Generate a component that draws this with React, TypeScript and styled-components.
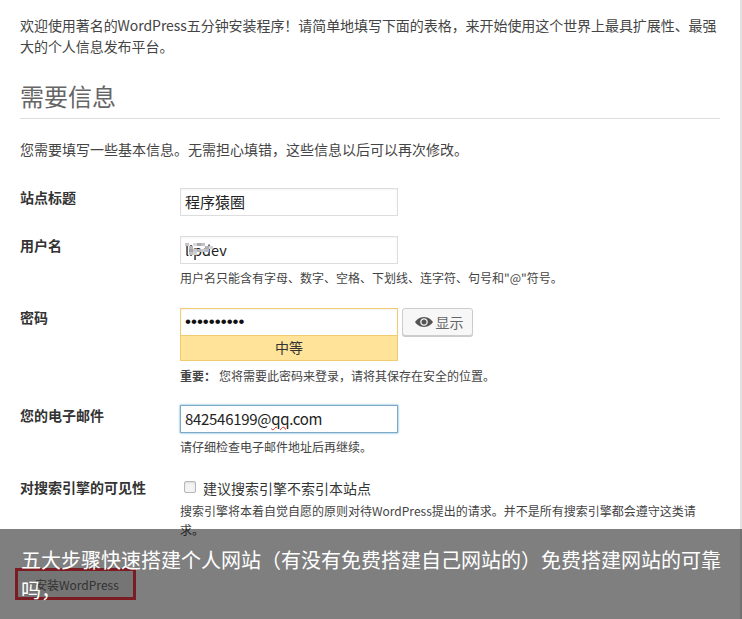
import React from "react";
import styled, { createGlobalStyle } from "styled-components";

const Global = createGlobalStyle`
  html, body { margin: 0; padding: 0; background: #fff; overflow: hidden; }
  body { font-family: "Noto Sans CJK SC", "Liberation Sans", sans-serif; color: #444; }
`;

const Page = styled.div`
  position: relative;
  height: 619px;
  padding: 15px 20px 0 20px;
  box-sizing: border-box;
  border-right: 2px solid #e2e2e2;
`;

const Intro = styled.p`
  margin: 0;
  font-size: 14px;
  line-height: 21px;
  letter-spacing: -0.06px;
`;

const Heading = styled.h1`
  margin: 21px 0 0;
  padding-bottom: 4px;
  font-size: 24px;
  line-height: 36px;
  font-weight: 400;
  color: #666;
  border-bottom: 1px solid #dedede;
`;

const Note = styled.p`
  margin: 20px 0 0;
  font-size: 14px;
  line-height: 21px;
`;

const Form = styled.div`
  margin-top: 28px;
  display: flex;
  flex-direction: column;
`;

const Row = styled.div<{ $gap: number }>`
  display: grid;
  grid-template-columns: 160px 1fr;
  margin-bottom: ${(p) => p.$gap}px;
`;

const Label = styled.div<{ $drop?: number }>`
  padding-top: ${(p) => p.$drop ?? 0}px;
  font-size: 14px;
  line-height: 18px;
  font-weight: 700;
  color: #333;
`;

const Field = styled.div<{ $focus?: boolean; $size?: number; $tone?: string }>`
  position: relative;
  box-sizing: border-box;
  width: 218px;
  height: 28px;
  padding: 0 4px;
  background: #fff;
  border: 1px solid ${(p) => (p.$tone ? p.$tone : p.$focus ? "#7fa9c9" : "#ddd")};
  box-shadow: ${(p) => (p.$focus ? "0 0 2px rgba(30,140,190,.8)" : "inset 0 1px 2px rgba(0,0,0,.05)")};
  font-size: ${(p) => p.$size ?? 15}px;
  line-height: 26px;
  color: #222;
  white-space: nowrap;
`;

const PasswordField = styled(Field)`
  font-family: "Liberation Sans", sans-serif;
  font-size: 17px;
  color: #111;
`;

const EmailText = styled.span`
  letter-spacing: -0.3px;
`;

const Mosaic = styled.svg`
  position: absolute;
  left: 4px;
  top: 3px;
`;

const Hint = styled.div<{ $drop?: number }>`
  font-size: 12px;
  line-height: 20px;
  color: #444;
  margin-top: ${(p) => p.$drop ?? 4}px;
`;

const Misspelt = styled.span`
  text-decoration: underline wavy #c22;
  text-decoration-thickness: 1px;
`;

const PasswordLine = styled.div`
  display: flex;
  align-items: flex-start;
  gap: 4px;
`;

const Strength = styled.div`
  box-sizing: border-box;
  width: 218px;
  height: 25px;
  background: #ffe399;
  border: 1px solid #f0cb6f;
  border-top: none;
  text-align: center;
  font-size: 14px;
  line-height: 22px;
  color: #333;
`;

const ShowButton = styled.button`
  box-sizing: border-box;
  width: 71px;
  height: 28px;
  padding: 0 0 0 2px;
  display: flex;
  align-items: center;
  justify-content: center;
  gap: 2px;
  background: #f7f7f7;
  border: 1px solid #ccc;
  border-radius: 3px;
  box-shadow: 0 1px 0 #ccc;
  font-family: inherit;
  font-size: 14px;
  color: #666;
`;

const Strong = styled.strong`
  font-weight: 700;
  margin-right: 3px;
`;

const CheckLine = styled.label`
  display: flex;
  align-items: center;
  gap: 7px;
  margin-left: 4px;
  font-size: 14px;
  line-height: 20px;
  color: #333;
`;

const CheckBox = styled.span`
  box-sizing: border-box;
  width: 12px;
  height: 12px;
  margin-top: -2px;
  background: #f4f4f4;
  border: 1px solid #b4b9be;
  border-radius: 2px;
  box-shadow: inset 0 1px 2px rgba(0,0,0,.1);
`;

const SearchHint = styled(Hint)`
  margin-top: 3px;
  line-height: 19px;
  max-width: 525px;
`;

const Submit = styled.button`
  box-sizing: border-box;
  display: block;
  width: 121px;
  height: 32px;
  margin: 0 0 0 -5px;
  padding: 0 0 0 17px;
  text-align: left;
  background: #ebebeb;
  border: 3px solid #f63844;
  font-family: inherit;
  font-size: 12px;
  color: #666;
`;

const Overlay = styled.div`
  position: absolute;
  left: 0;
  right: -2px;
  bottom: 0;
  height: 90px;
  box-sizing: border-box;
  padding: 16px 20px 0 21px;
  background: rgba(0, 0, 0, 0.5);
  color: #fff;
  font-size: 20px;
  line-height: 30px;
`;

const Eye = () => (
  <svg width="20" height="20" viewBox="0 0 20 20" fill="#555">
    <path d="M10 5C5.5 5 2.3 8 1 10c1.3 2 4.5 5 9 5s7.700-3 9-5c-1.300-2-4.500-5-9-5zm0 8.800c-2.100 0-3.800-1.700-3.800-3.800S7.900 6.200 10 6.200s3.800 1.700 3.800 3.800-1.700 3.800-3.800 3.800zM10 7.500a2.500 2.500 0 1 0 0 5 2.500 2.500 0 0 0 0-5z" />
  </svg>
);

const blocks: [number, number, string][] = [
  [0, 3, "#c8c4c8"], [4, 6, "#b8b4b8"], [8, 3, "#d8d8d8"], [12, 3, "#a8a8b0"], [16, 3, "#c0c0c8"], [20, 6, "#b0b0b8"],
  [4, 9, "#a8a4a8"], [8, 9, "#c8c8c8"], [12, 9, "#b4b4bc"], [16, 9, "#c8c8d0"], [20, 9, "#bcbcc4"], [24, 6, "#d4d4d8"],
  [4, 12, "#c4c0c4"], [8, 12, "#d4d4d4"],
];

export default function App() {
  return (
    <Page>
      <Global />
      <Intro>欢迎使用著名的WordPress五分钟安装程序！请简单地填写下面的表格，来开始使用这个世界上最具扩展性、最强大的个人信息发布平台。</Intro>
      <Heading>需要信息</Heading>
      <Note>您需要填写一些基本信息。无需担心填错，这些信息以后可以再次修改。</Note>
      <Form>
        <Row $gap={20}>
          <Label>站点标题</Label>
          <Field>程序猿圈</Field>
        </Row>
        <Row $gap={20}>
          <Label>用户名</Label>
          <div>
            <Field $size={14.5}>
              lipdev
              <Mosaic width="30" height="18" viewBox="0 0 30 18">
                {blocks.map(([x, y, c]) => (
                  <rect key={`${x}-${y}`} x={x} y={y} width="4" height="3" fill={c} />
                ))}
              </Mosaic>
            </Field>
            <Hint>用户名只能含有字母、数字、空格、下划线、连字符、句号和"@"符号。</Hint>
          </div>
        </Row>
        <Row $gap={19}>
          <Label>密码</Label>
          <div>
            <PasswordLine>
              <div>
                <PasswordField $tone="#f0cb6f">••••••••••</PasswordField>
                <Strength>中等</Strength>
              </div>
              <ShowButton><Eye />显示</ShowButton>
            </PasswordLine>
            <Hint $drop={5}><Strong>重要：</Strong>您将需要此密码来登录，请将其保存在安全的位置。</Hint>
          </div>
        </Row>
        <Row $gap={21}>
          <Label $drop={1}>您的电子邮件</Label>
          <div>
            <Field $focus><EmailText>842546199@<Misspelt>qq</Misspelt>.com</EmailText></Field>
            <Hint>请仔细检查电子邮件地址后再继续。</Hint>
          </div>
        </Row>
        <Row $gap={29}>
          <Label>对搜索引擎的可见性</Label>
          <div>
            <CheckLine><CheckBox />建议搜索引擎不索引本站点</CheckLine>
            <SearchHint>搜索引擎将本着自觉自愿的原则对待WordPress提出的请求。并不是所有搜索引擎都会遵守这类请求。</SearchHint>
          </div>
        </Row>
        <Submit>安装WordPress</Submit>
      </Form>
      <Overlay>五大步骤快速搭建个人网站（有没有免费搭建自己网站的）免费搭建网站的可靠吗，</Overlay>
    </Page>
  );
}
